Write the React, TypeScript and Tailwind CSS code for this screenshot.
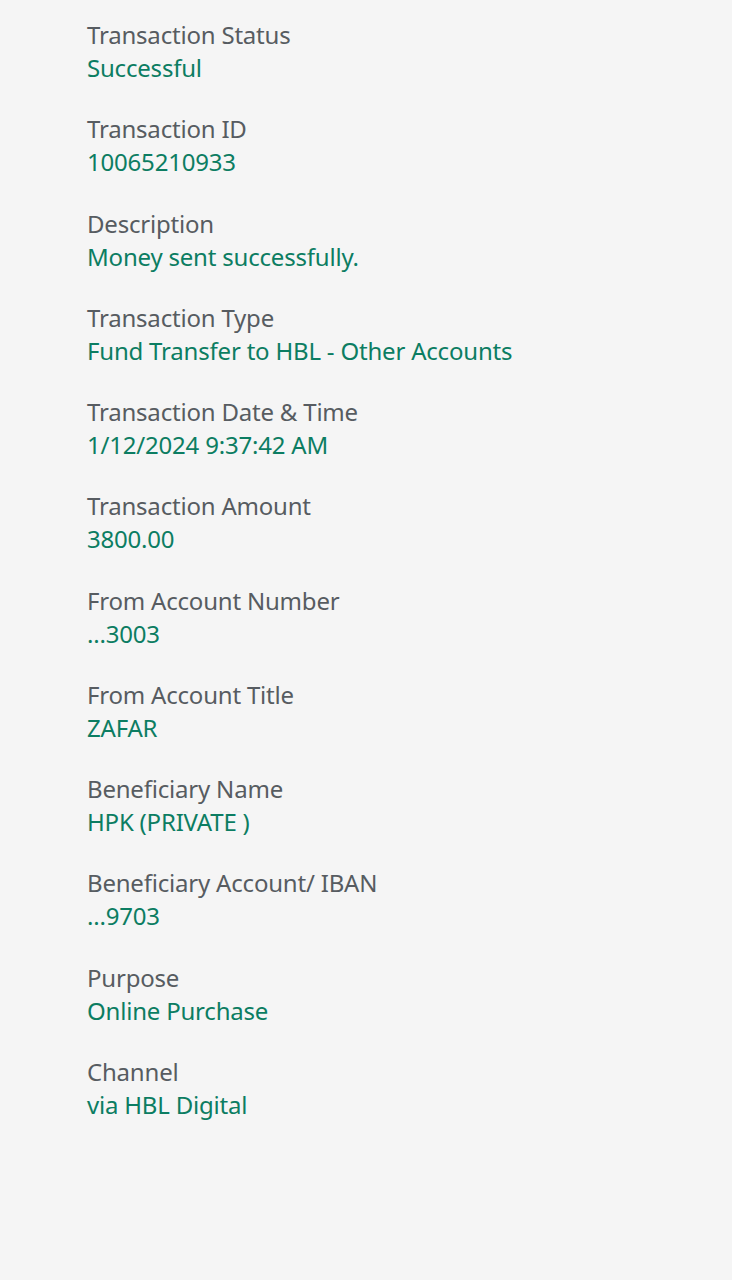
import React from "react";

const rows: [string, string][] = [
  ["Transaction Status", "Successful"],
  ["Transaction ID", "10065210933"],
  ["Description", "Money sent successfully."],
  ["Transaction Type", "Fund Transfer to HBL - Other Accounts"],
  ["Transaction Date & Time", "1/12/2024 9:37:42 AM"],
  ["Transaction Amount", "3800.00"],
  ["From Account Number", "...3003"],
  ["From Account Title", "ZAFAR"],
  ["Beneficiary Name", "HPK (PRIVATE )"],
  ["Beneficiary Account/ IBAN", "...9703"],
  ["Purpose", "Online Purchase"],
  ["Channel", "via HBL Digital"],
];

export default function App() {
  return (
    <div
      className="w-[732px] h-[1280px] bg-[#f5f5f5] pl-[87px] pt-[18px] flex flex-col gap-[27.27px]"
      style={{ fontFamily: '"Noto Sans", "Open Sans", sans-serif' }}
    >
      {rows.map(([l, v]) => (
        <div key={l} className="flex flex-col">
          <div className="text-[24px] leading-[33px] text-[#575c61] tracking-[-0.2px]">{l}</div>
          <div className="text-[24px] leading-[34px] text-[#0c7d62] tracking-[-0.2px]">{v}</div>
        </div>
      ))}
    </div>
  );
}
